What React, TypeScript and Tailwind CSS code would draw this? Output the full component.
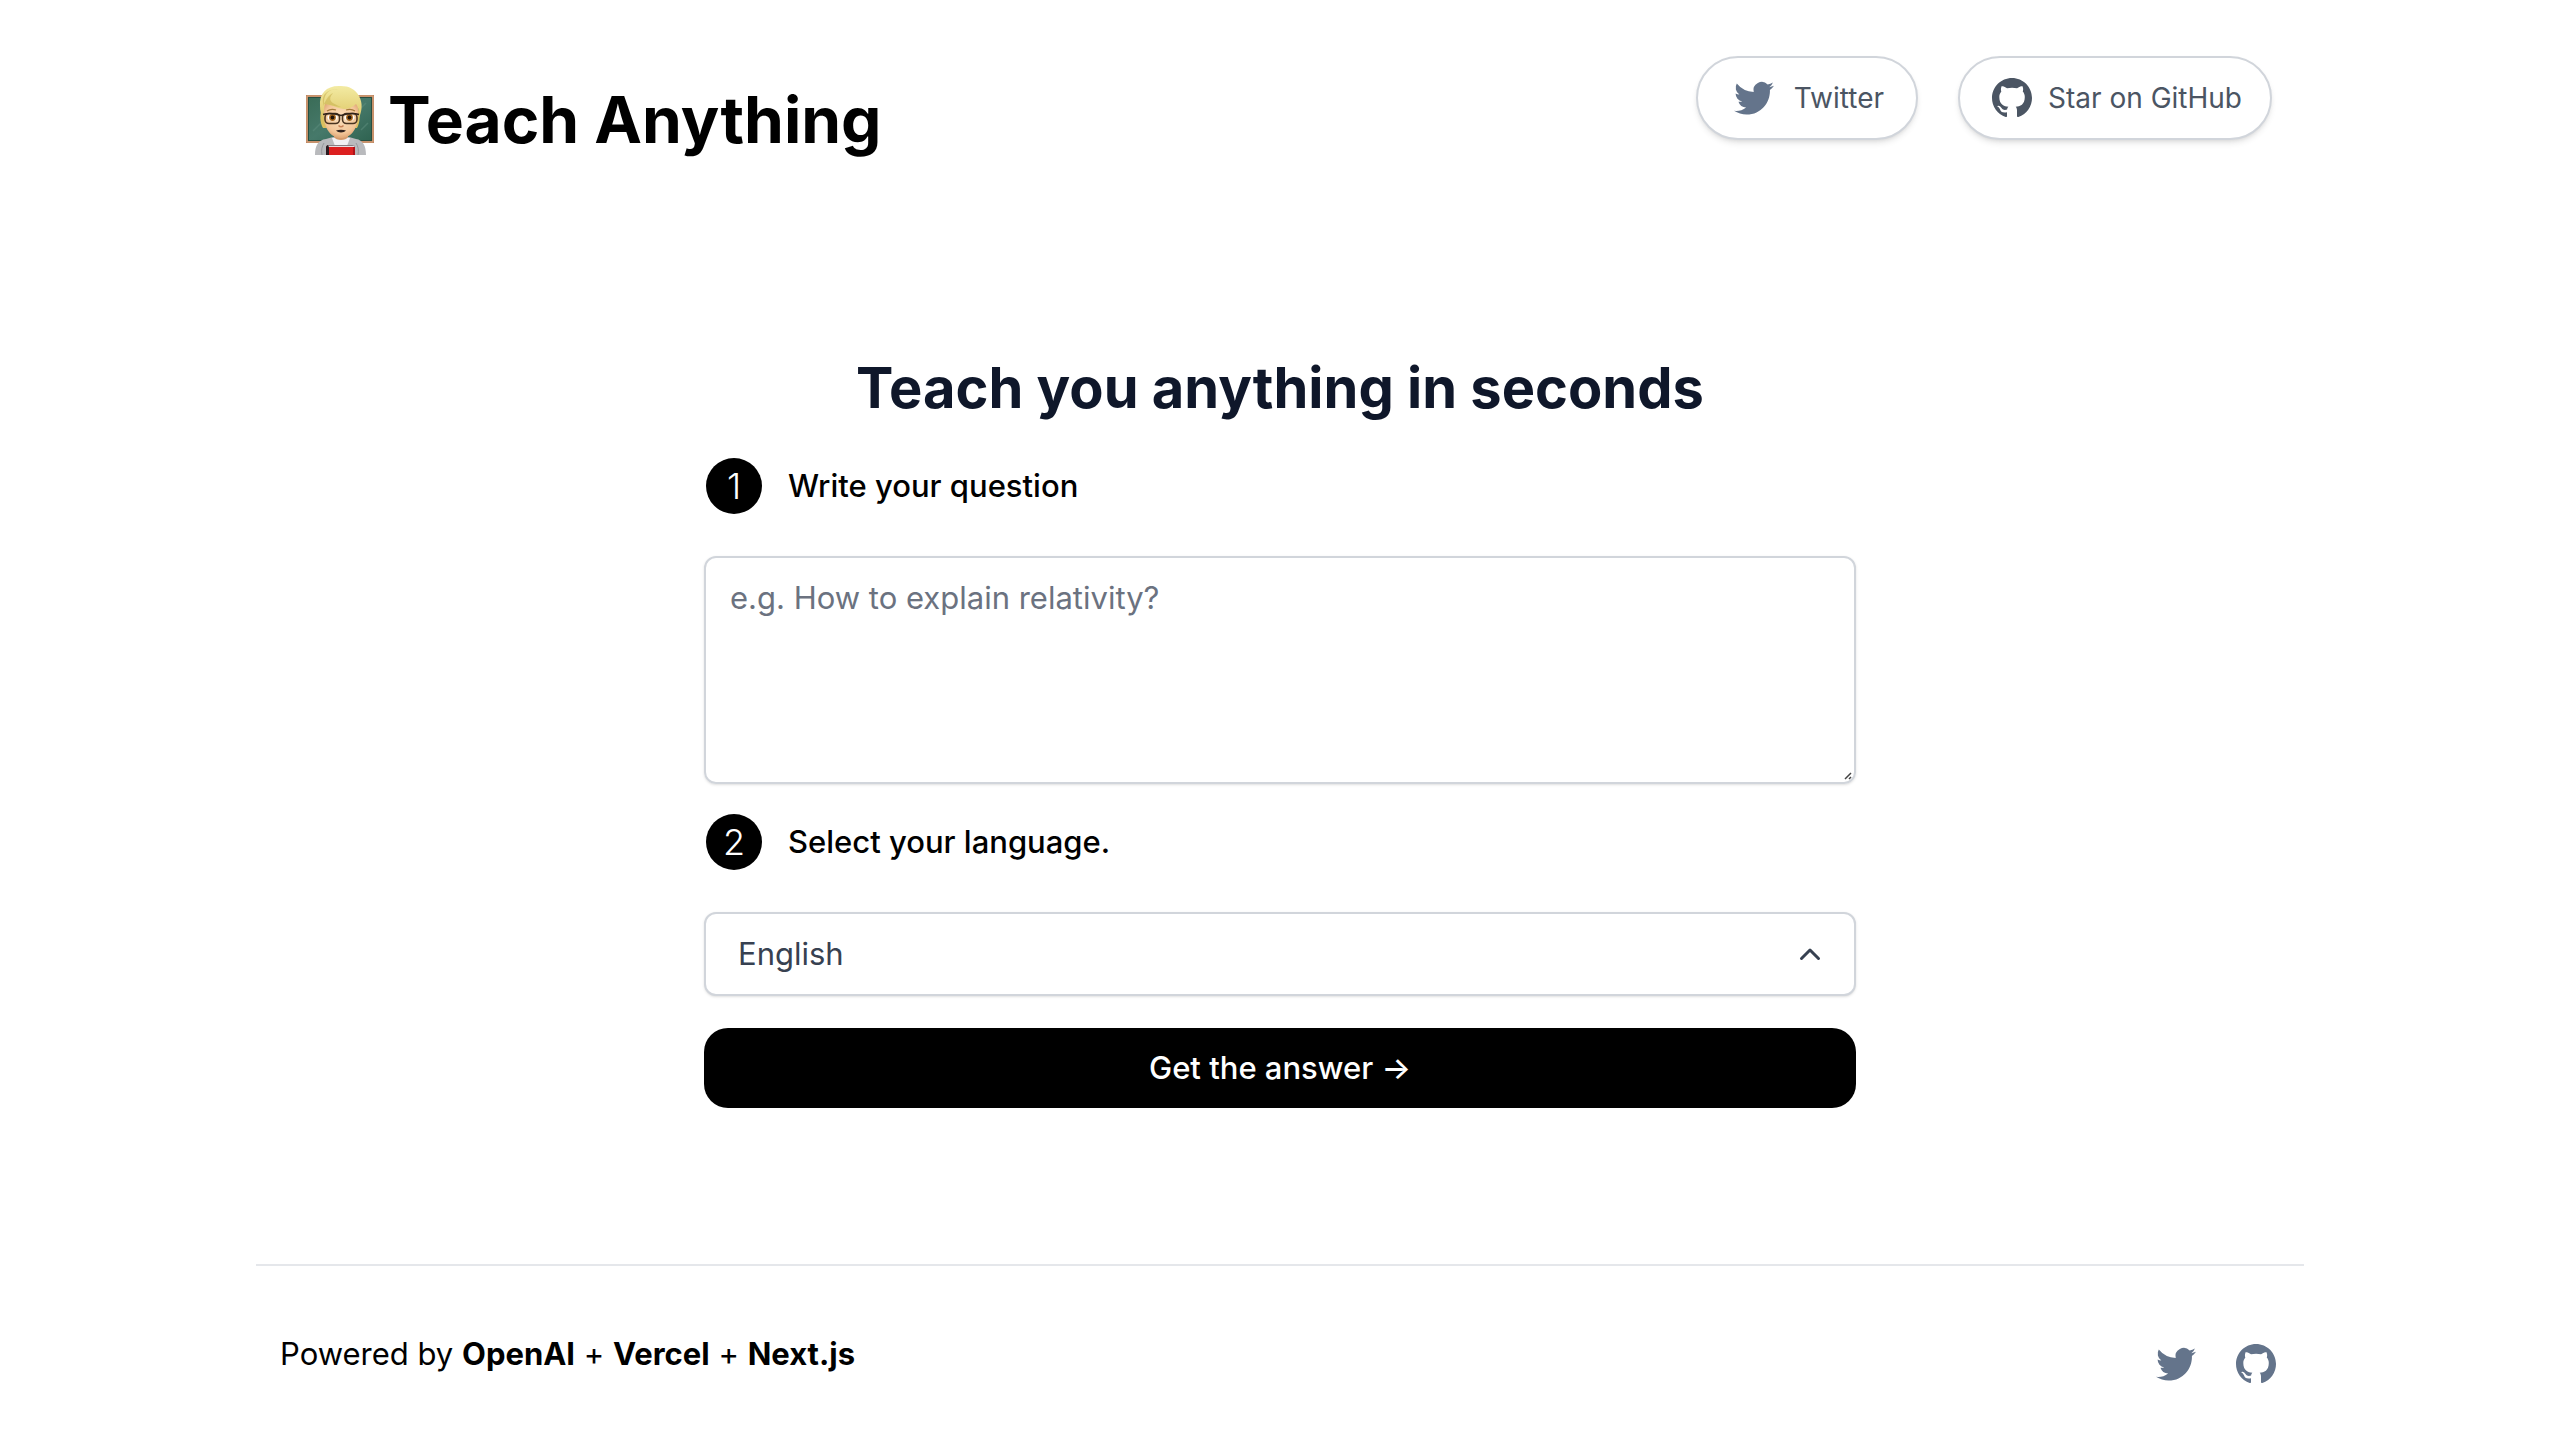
import React from "react";

const TwitterIcon = ({ className }: { className: string }) => (
  <svg viewBox="0 0 24 24" fill="currentColor" aria-hidden="true" className={className}>
    <path d="M8.29 20.251c7.547 0 11.675-6.253 11.675-11.675 0-.178 0-.355-.012-.53A8.348 8.348 0 0022 5.92a8.19 8.19 0 01-2.357.646 4.118 4.118 0 001.804-2.27 8.224 8.224 0 01-2.605.996 4.107 4.107 0 00-6.993 3.743 11.65 11.65 0 01-8.457-4.287 4.106 4.106 0 001.27 5.477A4.072 4.072 0 012.8 9.713v.052a4.105 4.105 0 003.292 4.022 4.095 4.095 0 01-1.853.07 4.108 4.108 0 003.834 2.85A8.233 8.233 0 012 18.407a11.616 11.616 0 006.29 1.84" />
  </svg>
);

const GitHubIcon = ({ className }: { className: string }) => (
  <svg viewBox="0 0 24 24" fill="currentColor" aria-hidden="true" className={className}>
    <path d="M12 2C6.475 2 2 6.475 2 12a9.994 9.994 0 006.838 9.488c.5.087.687-.213.687-.476 0-.237-.013-1.024-.013-1.862-2.512.463-3.162-.612-3.362-1.175-.113-.288-.6-1.175-1.025-1.413-.35-.187-.85-.65-.013-.662.788-.013 1.35.725 1.538 1.025.9 1.512 2.338 1.087 2.912.825.088-.65.35-1.087.638-1.337-2.225-.25-4.55-1.113-4.55-4.938 0-1.088.387-1.987 1.025-2.688-.1-.25-.45-1.275.1-2.65 0 0 .837-.262 2.75 1.026a9.28 9.28 0 012.5-.338c.85 0 1.7.112 2.5.337 1.912-1.3 2.75-1.024 2.75-1.024.55 1.375.2 2.4.1 2.65.637.7 1.025 1.587 1.025 2.687 0 3.838-2.337 4.688-4.562 4.938.362.312.675.912.675 1.85 0 1.337-.013 2.412-.013 2.75 0 .262.188.574.688.474A10.016 10.016 0 0022 12c0-5.525-4.475-10-10-10z" />
  </svg>
);

const TeacherIcon = ({ className }: { className: string }) => (
  <svg viewBox="0 0 72 72" aria-hidden="true" className={className}>
    <defs>
      <linearGradient id="hair" x1="0" y1="0" x2="0" y2="1">
        <stop offset="0" stopColor="#f3eba3" />
        <stop offset="1" stopColor="#dfc868" />
      </linearGradient>
      <radialGradient id="skin" cx="0.5" cy="0.4" r="0.65">
        <stop offset="0" stopColor="#fde0bd" />
        <stop offset="0.7" stopColor="#f3c698" />
        <stop offset="1" stopColor="#d99c6b" />
      </radialGradient>
      <linearGradient id="board" x1="0" y1="0" x2="1" y2="1">
        <stop offset="0" stopColor="#3a6c57" />
        <stop offset="0.5" stopColor="#46796a" />
        <stop offset="1" stopColor="#2f6351" />
      </linearGradient>
    </defs>
    <rect x="2" y="11" width="68" height="48" fill="#b27a55" />
    <rect x="3" y="12" width="66" height="46" fill="none" stroke="#dca983" strokeWidth="1" />
    <rect x="4.500" y="13.500" width="63" height="43" fill="url(#board)" stroke="#284f41" strokeWidth="1" />
    <path d="M9 47l9-9M54 27l8-8M57 46l7-7" stroke="#5b8b7b" strokeWidth="1.500" opacity="0.6" />
    <path d="M11 71c0-9 3-15 11-16l7-2h16l7 2c7 1 10 7 10 16z" fill="#b9babd" />
    <path d="M18 71c-1-5 0-9 2-12M54 71c1-5 0-9-2-12" fill="none" stroke="#96979b" />
    <path d="M28 54h18l-3 8H31z" fill="#f1f1f4" />
    <path d="M30 47h14v6c-2 4-12 4-14 0z" fill="#d49a6b" />
    <path d="M19 22c-4 8-3 17 0 22h5V22zM53 22c4 8 3 17 0 22h-5V22z" fill="#d9c05f" />
    <path d="M20 20h34c1 11 0 22-5 28-3 4-8 6-12 6s-9-2-12-6c-5-6-6-17-5-28z" fill="url(#skin)" />
    <path d="M37 2C23 1 15 9 16 22c0 5 1 8 3 11 1-5 1-10 2-13 8 1 11 4 19 5 5 0 9-2 12-5 3 4 3 9 3 14 3-7 4-15 0-22C51 5 45 2 37 2z" fill="url(#hair)" />
    <path d="M37 5c-12-1-18 4-17 17-4-11 3-18 17-17zM20 20c3-6 5-9 9-11-6 7-2 10 8 14-6 0-12-3-17-3z" fill="#c9b252" opacity="0.6" />
    <path d="M23 27c3-2 6-2 9-1M42 26c3-1 6-1 9 1" fill="none" stroke="#a57939" strokeWidth="1.300" />
    <ellipse cx="28.500" cy="33.500" rx="5" ry="3.600" fill="#fff" />
    <ellipse cx="45.500" cy="33.500" rx="5" ry="3.600" fill="#fff" />
    <circle cx="28.500" cy="33.500" r="3.400" fill="#a8671d" />
    <circle cx="45.500" cy="33.500" r="3.400" fill="#a8671d" />
    <circle cx="28.500" cy="33.500" r="1.900" fill="#1f1208" />
    <circle cx="45.500" cy="33.500" r="1.900" fill="#1f1208" />
    <rect x="21" y="29.500" width="14.500" height="10" rx="4" fill="none" stroke="#4a3420" strokeWidth="1.600" />
    <rect x="38.500" y="29.500" width="14.500" height="10" rx="4" fill="none" stroke="#4a3420" strokeWidth="1.600" />
    <path d="M19 30.500c6-2 12-1 18 1 6-2 12-3 18-1" fill="none" stroke="#30231a" strokeWidth="1.600" />
    <path d="M34.500 41.500c1.500 1.500 3.500 1.500 5 0" fill="none" stroke="#c98358" strokeWidth="1.500" />
    <path d="M32 46.500c3-1 7-1 10 0-2 2.500-8 2.500-10 0z" fill="#30221e" />
    <path d="M22 63c0-1 1-2 2-2h24c2 0 3 1 3 2v8H22z" fill="#2b1a20" />
    <path d="M25 63h26v8H25z" fill="#dc2020" />
    <path d="M24 61.500h26l1 1.500H25z" fill="#e6dde0" />
    <path d="M49 63h2v8h-2z" fill="#b01218" />
  </svg>
);

const StepMark = ({ n }: { n: number }) => (
  <span className="m-0.5 flex size-14 items-center justify-center rounded-full bg-black text-4xl font-light text-white">
    {n}
  </span>
);

const pill =
  "flex h-[84px] items-center rounded-full border-2 border-[#d1d5db] bg-white text-[28px] text-[#4b5563] shadow-md";

export default function App() {
  return (
    <div
      className="mx-auto flex min-h-screen max-w-[2048px] flex-col bg-white text-[31px] leading-[48px] text-black"
      style={{ fontFamily: '"Inter", sans-serif' }}
    >
      <header className="flex items-start justify-between px-8 pt-14">
        <a href="#home" className="flex items-center gap-3 pt-6 pl-4">
          <TeacherIcon className="size-[72px]" />
          <h1 className="text-[64px] leading-[80px] font-bold">Teach Anything</h1>
        </a>
        <nav className="flex gap-10">
          <a href="#twitter" className={`${pill} gap-4 px-8`}>
            <TwitterIcon className="size-12 text-[#64748b]" />
            Twitter
          </a>
          <a href="#github" className={`${pill} gap-3 px-7`}>
            <GitHubIcon className="size-12" />
            Star on GitHub
          </a>
        </nav>
      </header>

      <main className="mx-auto mt-48 flex w-full max-w-[1152px] flex-1 flex-col">
        <h2 className="text-center text-[56px] leading-[72px] font-bold text-[#0f172a]">
          Teach you anything in seconds
        </h2>
        <label htmlFor="question" className="mt-8 flex items-center gap-6 font-medium">
          <StepMark n={1} />
          Write your question
        </label>
        <div className="relative mt-10 flex">
          <textarea
            id="question"
            rows={4}
            placeholder="e.g. How to explain relativity?"
            className="w-full resize-none rounded-xl border-2 border-[#d1d5db] px-6 py-4 shadow-sm placeholder:text-[#6b7280]"
          />
          <svg viewBox="0 0 8 8" aria-hidden="true" className="absolute right-1 bottom-1 size-2 text-[#444]">
            <path d="M1 7L7 1M5 7l2-2" fill="none" stroke="currentColor" strokeWidth="1.5" />
          </svg>
        </div>
        <label htmlFor="language" className="mt-7 flex items-center gap-6 font-medium">
          <StepMark n={2} />
          Select your language.
        </label>
        <div className="relative mt-10">
          <select
            id="language"
            className="block h-[84px] w-full appearance-none rounded-xl border-2 border-[#d1d5db] bg-white px-8 text-[#374151] shadow-sm"
          >
            <option>English</option>
          </select>
          <svg
            viewBox="0 0 20 20"
            aria-hidden="true"
            className="pointer-events-none absolute inset-y-0 right-[26px] my-auto size-10 text-[#374151]"
          >
            <path
              d="M5.75 12.25L10 8l4.25 4.25"
              fill="none"
              stroke="currentColor"
              strokeWidth="1.5"
              strokeLinecap="round"
              strokeLinejoin="round"
            />
          </svg>
        </div>
        <button type="button" className="mt-8 h-20 rounded-3xl bg-black font-medium text-white">
          Get the answer →
        </button>
      </main>

      <footer className="flex h-44 items-start justify-between border-t-2 border-[#e5e7eb] px-6 pt-16">
        <p>
          Powered by{" "}
          <a href="#openai" className="font-bold">OpenAI</a> + <a href="#vercel" className="font-bold">Vercel</a> +{" "}
          <a href="#nextjs" className="font-bold">Next.js</a>
        </p>
        <div className="flex gap-8 pt-2.5 text-[#64748b]">
          <a href="#twitter" aria-label="Twitter"><TwitterIcon className="size-12" /></a>
          <a href="#github" aria-label="GitHub"><GitHubIcon className="size-12" /></a>
        </div>
      </footer>
    </div>
  );
}
